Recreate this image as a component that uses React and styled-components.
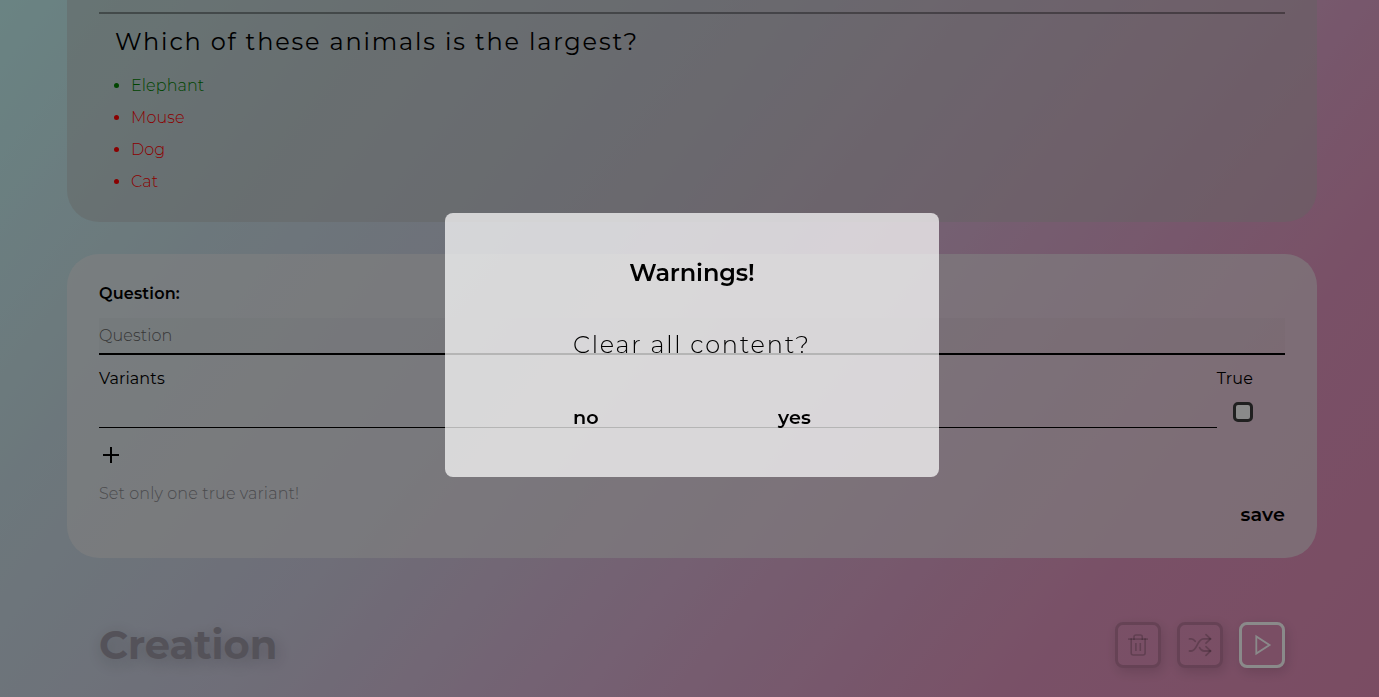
import React from "react";
import styled, { createGlobalStyle } from "styled-components";

const GlobalStyle = createGlobalStyle`
  * { box-sizing: border-box; }
  html, body, #root { height: 100%; }
  body {
    margin: 0;
    overflow: hidden;
    font-family: Montserrat, Inter, sans-serif;
    font-size: 16px;
    color: #000;
  }
  h1, h2, h3, p, ul { margin: 0; padding: 0; }
  button, input { font: inherit; color: inherit; border: 0; padding: 0; background: none; border-radius: 0; }
`;

const Page = styled.main`
  height: 697px;
  padding: 0 62px 0 67px;
  display: flex;
  flex-direction: column;
  background: linear-gradient(128deg, #c4f3f2 0%, #c8dde5 20%, #cdcbde 40%, #d9afd1 60%, #e095be 81%, #e28db7 100%);
`;

const Card = styled.section`
  flex: none;
  padding: 0 32px;
  background: ${(p) => p.$tone};
  border-radius: ${(p) => (p.$cut ? "0 0 32px 32px" : "32px")};
`;

const AnswersCard = styled(Card)`
  height: 222px;
  padding-top: 12px;
`;

const FormCard = styled(Card)`
  height: 304px;
  margin-top: 32px;
  padding-top: 28px;
  display: flex;
  flex-direction: column;
`;

const Divider = styled.div`
  height: 2px;
  background: rgba(0, 0, 0, 0.35);
`;

const QuestionTitle = styled.h2`
  padding: 12px 0 0 16px;
  height: 56px;
  font-size: 24px;
  line-height: 32px;
  font-weight: 400;
  letter-spacing: 1.82px;
`;

const AnswerList = styled.ul`
  padding-left: 32px;
`;

const Answer = styled.li`
  height: 32px;
  line-height: 32px;
  font-weight: 300;
  letter-spacing: 0.1px;
  color: ${(p) => (p.$right ? "#008000" : "#ff0000")};
`;

const Label = styled.label`
  height: 36px;
  line-height: 24px;
  font-weight: 600;
  letter-spacing: 0.2px;
`;

const QuestionInput = styled.input`
  width: 100%;
  height: 37px;
  border-bottom: 2px solid #000;
  background: rgba(0, 0, 0, 0.02);
  font-weight: 300;
  letter-spacing: 0.12px;
  outline: none;
  &::placeholder { color: #666; opacity: 1; }
`;

const VariantHead = styled.div`
  display: flex;
  justify-content: space-between;
  padding: 12px 32px 0 0;
  height: 39px;
  line-height: 24px;
  letter-spacing: 0.12px;
`;

const VariantRow = styled.div`
  display: flex;
  align-items: flex-start;
  gap: 16px;
  height: 34px;
`;

const VariantInput = styled.input`
  width: 1118px;
  height: 34px;
  border-bottom: 1px solid #000;
  outline: none;
`;

const Check = styled.span`
  width: 20px;
  height: 20px;
  margin-top: 8px;
  border: 3px solid #3c3c3c;
  border-radius: 5px;
  background: #fff;
`;

const AddButton = styled.button`
  width: 24px;
  height: 24px;
  margin-top: 15px;
  svg { display: block; }
`;

const Hint = styled.p`
  margin-top: 15px;
  line-height: 24px;
  font-weight: 300;
  letter-spacing: 0.13px;
  color: #8a8a8e;
`;

const TextButton = styled.button`
  font-size: 19.2px;
  font-weight: 650;
  line-height: 24px;
  letter-spacing: 0.1px;
`;

const SaveButton = styled(TextButton)`
  align-self: flex-end;
  margin-top: -4px;
`;

const Footer = styled.footer`
  flex: none;
  display: flex;
  align-items: center;
  justify-content: space-between;
  height: 46px;
  margin: 64px 32px 0;
`;

const Title = styled.h1`
  font-size: 40px;
  line-height: 46px;
  font-weight: 700;
  color: #9c98a5;
  text-shadow: 2px 4px 16px rgba(0, 0, 0, 0.2);
`;

const Actions = styled.div`
  display: flex;
  gap: 16px;
`;

const IconButton = styled.button`
  display: grid;
  place-items: center;
  width: 46px;
  height: 46px;
  border: 3px solid ${(p) => (p.$active ? "#fff" : "rgba(0, 0, 0, 0.16)")};
  border-radius: 8px;
  color: ${(p) => (p.$active ? "#fff" : "rgba(0, 0, 0, 0.2)")};
  box-shadow: 2px 4px 12px rgba(0, 0, 0, 0.13);
  background: transparent;
`;

const Overlay = styled.div`
  position: fixed;
  inset: 0;
  display: flex;
  align-items: flex-start;
  justify-content: center;
  padding: 213px 0 0 5px;
  background: rgba(0, 0, 0, 0.46);
`;

const Dialog = styled.div`
  width: 494px;
  height: 264px;
  padding: 44px 128px 0;
  display: flex;
  flex-direction: column;
  border-radius: 8px;
  background: rgba(255, 255, 255, 0.71);
`;

const DialogTitle = styled.h3`
  align-self: center;
  font-size: 24px;
  line-height: 32px;
  font-weight: 600;
  letter-spacing: -0.1px;
`;

const DialogText = styled.p`
  margin-top: 40px;
  white-space: nowrap;
  font-size: 24px;
  line-height: 32px;
  font-weight: 300;
  letter-spacing: 1.78px;
`;

const DialogButtons = styled.div`
  display: flex;
  justify-content: space-between;
  margin-top: 44px;
`;

const TrashIcon = () => (
  <svg width="20" height="22" viewBox="0 0 20 22" fill="none" stroke="currentColor" strokeWidth="1.6">
    <path d="M0 5.1h20" />
    <path d="M6 5.900V3q0-2 2-2h4.300q2 0 2 2v2.900" />
    <path d="M3.200 4.300v14.700q0 2 2 2h9.900q2 0 2-2V4.300" />
    <path d="M7.900 9v8M12.300 9v8" />
  </svg>
);

const ShuffleIcon = () => (
  <svg width="24" height="24" viewBox="0 0 24 24" fill="none" stroke="currentColor" strokeWidth="1.8" strokeLinecap="round" strokeLinejoin="round">
    <path d="M1.500 5.900h1.700c1.800 0 3 .9 4 2.300" />
    <path d="M1.500 18h1.700C9.500 18 8.800 5.900 15.500 5.900H22.500" />
    <path d="M11.600 14.600c1.100 2 2.400 3.400 4.400 3.400h6.500" />
    <path d="M18 1.600L22.500 5.900 18 10.200" />
    <path d="M18 13.700L22.500 18 18 22.300" />
  </svg>
);

const PlayIcon = () => (
  <svg width="20" height="22" viewBox="0 0 20 22" fill="none" stroke="currentColor" strokeWidth="1.8">
    <path d="M4.300 2.500V19.500L17.500 11z" />
  </svg>
);

export default function App() {
  return (
    <>
      <GlobalStyle />
      <Page>
        <AnswersCard $cut $tone="rgba(185, 185, 182, 0.44)">
          <Divider />
          <QuestionTitle>Which of these animals is the largest?</QuestionTitle>
          <AnswerList>
            <Answer $right>Elephant</Answer>
            <Answer>Mouse</Answer>
            <Answer>Dog</Answer>
            <Answer>Cat</Answer>
          </AnswerList>
        </AnswersCard>
        <FormCard $tone="rgba(237, 237, 237, 0.6)">
          <Label>Question:</Label>
          <QuestionInput placeholder="Question" />
          <VariantHead>
            <span>Variants</span>
            <span>True</span>
          </VariantHead>
          <VariantRow>
            <VariantInput />
            <Check />
          </VariantRow>
          <AddButton aria-label="add">
            <svg width="24" height="24" viewBox="0 0 24 24" stroke="#000" strokeWidth="2">
              <path d="M4 12h16M12 4v16" />
            </svg>
          </AddButton>
          <Hint>Set only one true variant!</Hint>
          <SaveButton>save</SaveButton>
        </FormCard>
        <Footer>
          <Title>Creation</Title>
          <Actions>
            <IconButton><TrashIcon /></IconButton>
            <IconButton><ShuffleIcon /></IconButton>
            <IconButton $active><PlayIcon /></IconButton>
          </Actions>
        </Footer>
      </Page>
      <Overlay>
        <Dialog>
          <DialogTitle>Warnings!</DialogTitle>
          <DialogText>Clear all content?</DialogText>
          <DialogButtons>
            <TextButton>no</TextButton>
            <TextButton>yes</TextButton>
          </DialogButtons>
        </Dialog>
      </Overlay>
    </>
  );
}
